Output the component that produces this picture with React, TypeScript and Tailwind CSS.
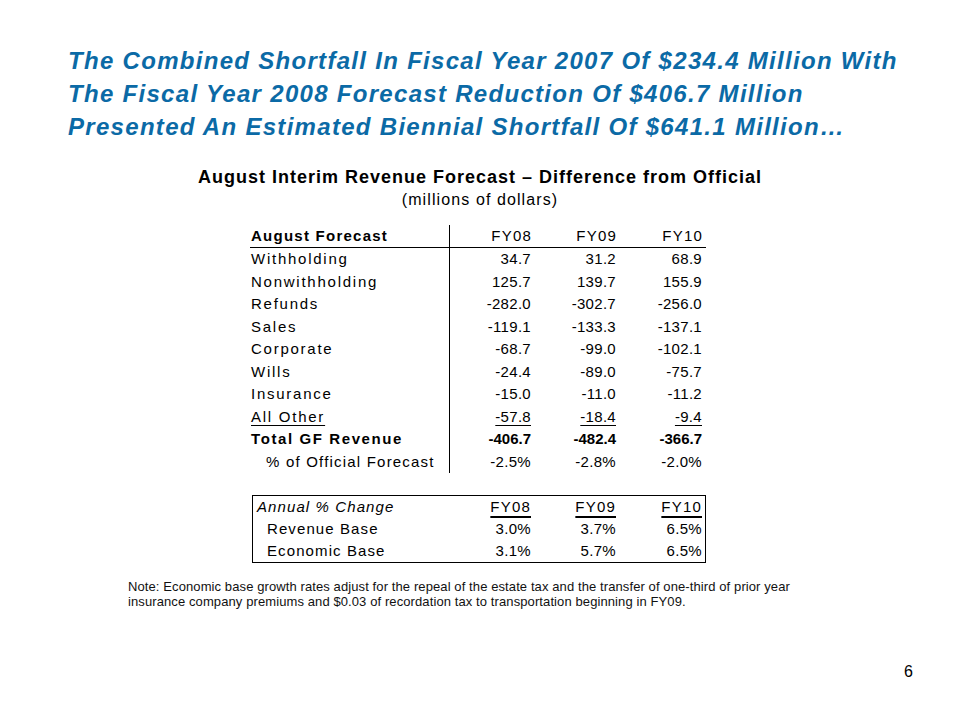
import React from "react";

type Row = {
  label: string;
  values: string[];
  kind?: "underline" | "bold" | "indent";
};

const rows: Row[] = [
  { label: "Withholding", values: ["34.7", "31.2", "68.9"] },
  { label: "Nonwithholding", values: ["125.7", "139.7", "155.9"] },
  { label: "Refunds", values: ["-282.0", "-302.7", "-256.0"] },
  { label: "Sales", values: ["-119.1", "-133.3", "-137.1"] },
  { label: "Corporate", values: ["-68.7", "-99.0", "-102.1"] },
  { label: "Wills", values: ["-24.4", "-89.0", "-75.7"] },
  { label: "Insurance", values: ["-15.0", "-11.0", "-11.2"] },
  { label: "All Other", values: ["-57.8", "-18.4", "-9.4"], kind: "underline" },
  { label: "Total GF Revenue", values: ["-406.7", "-482.4", "-366.7"], kind: "bold" },
  { label: "% of Official Forecast", values: ["-2.5%", "-2.8%", "-2.0%"], kind: "indent" },
];

export default function App() {
  return (
    <div className="w-[960px] h-[720px] bg-white flex flex-col font-['Liberation_Sans',Arial,sans-serif] text-black">
      {/* Title */}
      <div className="pt-[44px] pl-[68px] text-[24px] leading-[33px] font-bold italic tracking-[1.3px] text-[#0b6aa6]">
        <div>The Combined Shortfall In Fiscal Year 2007 Of $234.4 Million With</div>
        <div>The Fiscal Year 2008 Forecast Reduction Of $406.7 Million</div>
        <div>Presented An Estimated Biennial Shortfall Of $641.1 Million…</div>
      </div>

      {/* Subtitle */}
      <div className="mt-[23px] text-center">
        <div className="text-[18px] leading-[22px] font-bold tracking-[1px]">
          August Interim Revenue Forecast – Difference from Official
        </div>
        <div className="mt-[2px] text-[16px] leading-[20px] tracking-[1.1px]">(millions of dollars)</div>
      </div>

      {/* Table 1 */}
      <div className="mt-[15px] ml-[250px] w-[456px] text-[15px]">
        <div className="grid grid-cols-[200px_81px_85px_86px] h-[23px] items-center border-b border-black">
          <div className="h-full flex items-center pl-[1px] border-r border-black font-bold tracking-[1.25px]">
            August Forecast
          </div>
          {["FY08", "FY09", "FY10"].map((h) => (
            <div key={h} className="text-right tracking-[1.2px] -mr-[1px]">
              {h}
            </div>
          ))}
        </div>
        {rows.map((r) => (
          <div key={r.label} className="grid grid-cols-[200px_81px_85px_86px] h-[22.5px] items-center">
            <div
              className={
                "h-full flex items-center border-r border-black " +
                (r.kind === "bold"
                  ? "pl-[1px] font-bold tracking-[1.6px]"
                  : r.kind === "indent"
                  ? "pl-[16px] tracking-[1.2px]"
                  : "pl-[1px] tracking-[1.75px]")
              }
            >
              <span className={r.kind === "underline" ? "underline underline-offset-[3px]" : ""}>{r.label}</span>
            </div>
            {r.values.map((v, i) => (
              <div
                key={i}
                className={"text-right " + (r.kind === "bold" ? "font-bold tracking-[0px]" : "tracking-[0.3px]")}
              >
                <span className={r.kind === "underline" ? "underline underline-offset-[3px]" : ""}>{v}</span>
              </div>
            ))}
          </div>
        ))}
      </div>

      {/* Table 2 */}
      <div className="mt-[22px] ml-[252px] w-[454px] border border-black text-[15px]">
        <div className="grid grid-cols-[198px_81px_85px_86px] h-[22px] items-center">
          <div className="pl-[4px] italic tracking-[1.1px]">Annual % Change</div>
          {["FY08", "FY09", "FY10"].map((h) => (
            <div key={h} className="text-right pr-[1px] tracking-[1.2px]">
              <span className="underline decoration-2 underline-offset-[4px]">{h}</span>
            </div>
          ))}
        </div>
        {[
          { label: "Revenue Base", values: ["3.0%", "3.7%", "6.5%"] },
          { label: "Economic Base", values: ["3.1%", "5.7%", "6.5%"] },
        ].map((r) => (
          <div key={r.label} className="grid grid-cols-[198px_81px_85px_86px] h-[22px] items-center">
            <div className="pl-[14px] tracking-[1.1px]">{r.label}</div>
            {r.values.map((v, i) => (
              <div key={i} className="text-right pr-[1px] tracking-[0.3px]">
                {v}
              </div>
            ))}
          </div>
        ))}
      </div>

      {/* Note */}
      <div className="mt-[16px] ml-[128px] text-[13px] leading-[15px] tracking-[0.1px] text-[#111]">
        <div>
          Note: Economic base growth rates adjust for the repeal of the estate tax and the transfer of one-third of prior year
        </div>
        <div>insurance company premiums and $0.03 of recordation tax to transportation beginning in FY09.</div>
      </div>

      {/* Page number */}
      <div className="mt-auto mb-[38px] flex justify-end pr-[47px] text-[16px] leading-[20px]">6</div>
    </div>
  );
}
